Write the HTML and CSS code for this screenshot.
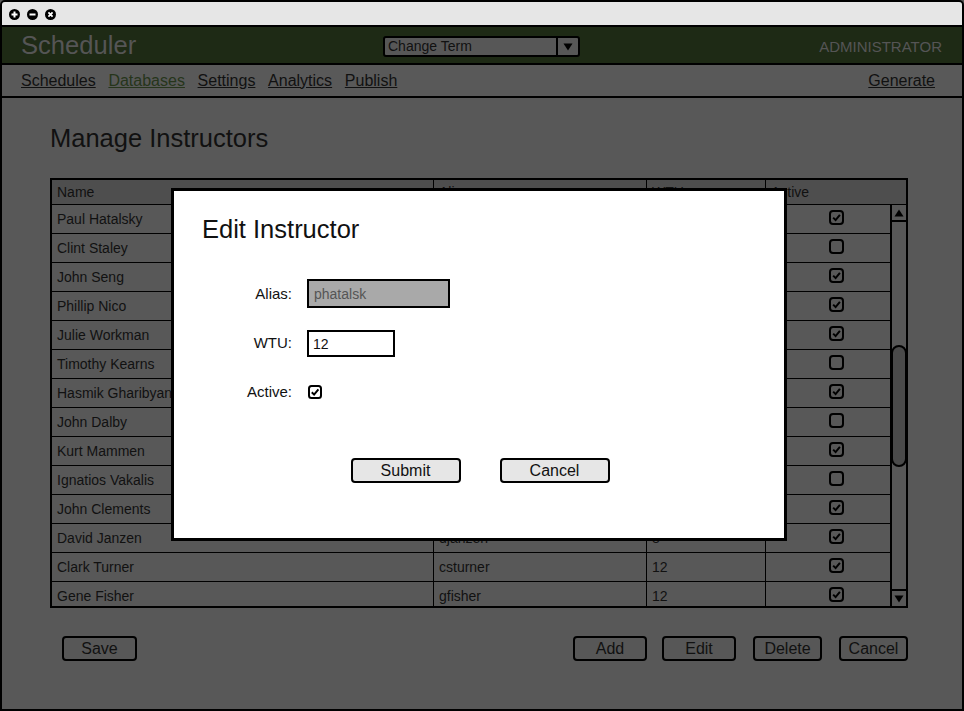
FILE: index.html
```html
<!DOCTYPE html>
<html>
<head>
<meta charset="utf-8">
<title>Scheduler</title>
<link rel="stylesheet" href="styles.css">
</head>
<body>
<div class="window">
  <div class="titlebar">
    <svg class="ctl" width="11" height="11" viewBox="0 0 11 11"><circle cx="5.5" cy="5.5" r="5.5" fill="#000"/><path d="M5.5 2.5v6M2.5 5.5h6" stroke="#fff" stroke-width="2"/></svg>
    <svg class="ctl" width="11" height="11" viewBox="0 0 11 11"><circle cx="5.5" cy="5.5" r="5.5" fill="#000"/><path d="M2.5 5.5h6" stroke="#fff" stroke-width="2"/></svg>
    <svg class="ctl" width="11" height="11" viewBox="0 0 11 11"><circle cx="5.5" cy="5.5" r="5.5" fill="#000"/><path d="M3.4 3.4l4.2 4.2M7.6 3.4l-4.2 4.2" stroke="#fff" stroke-width="1.8"/></svg>
  </div>
  <div class="header">
    <div class="brand">Scheduler</div>
    <div class="select">
      <span class="select-text">Change Term</span>
      <span class="select-arrow"><svg width="10" height="8" viewBox="0 0 10 8"><path d="M0.5 0.5h9L5 7.5z" fill="#000"/></svg></span>
    </div>
    <div class="role">ADMINISTRATOR</div>
  </div>
  <div class="nav">
    <div class="nav-links">
      <a class="nav-link">Schedules</a>
      <a class="nav-link current">Databases</a>
      <a class="nav-link">Settings</a>
      <a class="nav-link">Analytics</a>
      <a class="nav-link">Publish</a>
    </div>
    <a class="nav-link">Generate</a>
  </div>
  <div class="content">
    <h1 class="page-title">Manage Instructors</h1>
    <div class="table">
      <div class="thead">
        <div class="cell">Name</div>
        <div class="cell">Alias</div>
        <div class="cell">WTU</div>
        <div class="cell">Active</div>
      </div>
      <div class="tbody">
        <div class="rows" id="rows"></div>
        <div class="scrollbar">
          <div class="sb-btn sb-up"><svg width="10" height="8" viewBox="0 0 10 8"><path d="M5 0.5L9.5 7.5h-9z" fill="#000"/></svg></div>
          <div class="sb-thumb"></div>
          <div class="sb-btn sb-down"><svg width="10" height="8" viewBox="0 0 10 8"><path d="M0.5 0.5h9L5 7.5z" fill="#000"/></svg></div>
        </div>
      </div>
    </div>
    <div class="actions">
      <button class="btn">Save</button>
      <div class="actions-right">
        <button class="btn btn-add">Add</button>
        <button class="btn btn-edit">Edit</button>
        <button class="btn btn-delete">Delete</button>
        <button class="btn btn-cancel">Cancel</button>
      </div>
    </div>
  </div>

  <div class="dialog">
    <h2 class="dialog-title">Edit Instructor</h2>
    <div class="form">
      <label class="form-label">Alias:</label>
      <div class="field field-alias">phatalsk</div>
      <label class="form-label">WTU:</label>
      <div class="field field-wtu">12</div>
      <label class="form-label">Active:</label>
      <div class="form-check"><svg width="14" height="14" viewBox="0 0 14 14"><rect x="1" y="1" width="12" height="12" rx="2.5" fill="#fff" stroke="#000" stroke-width="2"/><path d="M3.8 7.2l2.3 2.4 4.3-5.2" fill="none" stroke="#000" stroke-width="2"/></svg></div>
    </div>
    <div class="dialog-buttons">
      <button class="dbtn">Submit</button>
      <button class="dbtn">Cancel</button>
    </div>
  </div>
</div>
<script src="script.js"></script>
</body>
</html>
```
FILE: script.js
```js
var data = [
  ["Paul Hatalsky","phatalsk","12",1],
  ["Clint Staley","cstaley","12",0],
  ["John Seng","jseng","12",1],
  ["Phillip Nico","pnico","12",1],
  ["Julie Workman","jworkman","12",1],
  ["Timothy Kearns","tkearns","12",0],
  ["Hasmik Gharibyan","hghariby","12",1],
  ["John Dalby","jdalby","12",0],
  ["Kurt Mammen","kmammen","12",1],
  ["Ignatios Vakalis","ivakalis","12",0],
  ["John Clements","clements","12",1],
  ["David Janzen","djanzen","8",1],
  ["Clark Turner","csturner","12",1],
  ["Gene Fisher","gfisher","12",1]
];
var on = '<svg width="15" height="15" viewBox="0 0 15 15"><rect x="1" y="1" width="13" height="13" rx="3" fill="none" stroke="#000" stroke-width="2"/><path d="M4.2 7.6l2.4 2.5 4.3-5.3" fill="none" stroke="#000" stroke-width="2"/></svg>';
var off = '<svg width="15" height="15" viewBox="0 0 15 15"><rect x="1" y="1" width="13" height="13" rx="3" fill="none" stroke="#000" stroke-width="2"/></svg>';
var html = "";
data.forEach(function (r) {
  html += '<div class="row"><div class="cell">' + r[0] + '</div><div class="cell">' + r[1] +
    '</div><div class="cell">' + r[2] + '</div><div class="cell cell-check">' + (r[3] ? on : off) + '</div></div>';
});
document.getElementById("rows").innerHTML = html;
```
FILE: styles.css
```css
* { box-sizing: border-box; }
html, body { margin: 0; padding: 0; }
body {
  font-family: "Liberation Sans", Arial, sans-serif;
  color: #111;
  background: #585858;
}
.window {
  width: 964px;
  height: 711px;
  border: 2px solid #000;
  border-radius: 5px 5px 0 0;
  background: #585858;
  position: relative;
  overflow: hidden;
  display: flex;
  flex-direction: column;
}
.titlebar {
  height: 25px;
  flex: none;
  background: #e6e6e6;
  border-bottom: 2px solid #000;
  display: flex;
  align-items: center;
  gap: 7px;
  padding-left: 7px;
  padding-top: 1px;
}
.ctl { display: block; }
.header {
  height: 38px;
  flex: none;
  background: #1e2a15;
  border-bottom: 2px solid #000;
  display: grid;
  grid-template-columns: 1fr auto 1fr;
  align-items: center;
  padding: 0 20px 0 19px;
}
.brand {
  font-size: 25.6px;
  color: #555;
  line-height: 30px;
}
.select {
  width: 197px;
  height: 21px;
  margin-top: 3px;
  border: 2px solid #000;
  border-radius: 3px;
  background: #575757;
  display: flex;
  align-items: stretch;
}
.select-text {
  flex: 1;
  font-size: 14px;
  line-height: 17px;
  padding-left: 3px;
  color: #111;
}
.select-arrow {
  width: 22px;
  border-left: 2px solid #000;
  display: flex;
  align-items: center;
  justify-content: center;
}
.select-arrow svg { display: block; }
.role {
  justify-self: end;
  font-size: 15px;
  color: #555;
  margin-top: 2px;
}
.nav {
  height: 33px;
  flex: none;
  background: #595959;
  border-bottom: 2px solid #000;
  display: flex;
  align-items: center;
  justify-content: space-between;
  padding: 0 27px 0 19px;
}
.nav-links { display: flex; gap: 12.7px; }
.nav-link {
  font-size: 16px;
  color: #111;
  text-decoration: underline;
  line-height: 20px;
}
.nav-link.current { color: #26351b; }
.content {
  flex: 1;
  padding: 25px 54px 0 48px;
}
.page-title {
  margin: 0 0 25px 0;
  font-size: 25.5px;
  font-weight: normal;
  line-height: 30px;
  color: #111;
}
.table {
  width: 858px;
  height: 430px;
  border: 2px solid #000;
  display: flex;
  flex-direction: column;
}
.thead {
  height: 25px;
  flex: none;
  background: #4e4e4e;
  border-bottom: 1px solid #000;
  display: grid;
  grid-template-columns: 381px 213px 119px 141px;
}
.row {
  height: 29px;
  border-bottom: 1px solid #000;
  display: grid;
  grid-template-columns: 381px 213px 119px 125px;
}
.cell {
  font-size: 14px;
  line-height: 16px;
  display: flex;
  align-items: center;
  padding-left: 5px;
  color: #111;
}
.cell + .cell { border-left: 1px solid #000; padding-left: 5px; }
.cell-check { justify-content: center; padding-left: 16px !important; padding-bottom: 3px; }
.cell-check svg { display: block; }
.tbody {
  flex: 1;
  display: flex;
  min-height: 0;
}
.rows { flex: 1; overflow: hidden; }
.scrollbar {
  width: 16px;
  border-left: 2px solid #000;
  position: relative;
  display: flex;
  flex-direction: column;
  justify-content: space-between;
}
.sb-btn {
  height: 17px;
  display: flex;
  align-items: center;
  justify-content: center;
}
.sb-btn svg { display: block; }
.sb-up { border-bottom: 2px solid #000; }
.sb-down { border-top: 2px solid #000; }
.sb-thumb {
  position: absolute;
  left: -1px;
  top: 140px;
  width: 16px;
  height: 122px;
  border: 2px solid #000;
  border-radius: 8px;
  background: #4a4a4a;
}
.actions {
  margin-top: 28px;
  padding-left: 12px;
  display: flex;
  justify-content: space-between;
}
.actions-right { display: flex; }
.btn {
  height: 25px;
  font-family: "Liberation Sans", Arial, sans-serif;
  font-size: 16px;
  color: #111;
  background: #575757;
  border: 2px solid #000;
  border-radius: 4px;
  padding: 0;
  width: 75px;
  line-height: 19px;
}
.btn-add { width: 74px; }
.btn-edit { width: 74px; margin-left: 15px; }
.btn-delete { width: 69px; margin-left: 17px; }
.btn-cancel { width: 69px; margin-left: 17px; }
.dialog {
  position: absolute;
  left: 169px;
  top: 186px;
  width: 616px;
  height: 353px;
  background: #fff;
  border: 3px solid #000;
  padding: 23px 0 0 28px;
}
.dialog-title {
  margin: 0;
  font-size: 25.5px;
  font-weight: normal;
  line-height: 30px;
  color: #111;
}
.form {
  margin-top: 25px;
  display: grid;
  grid-template-columns: 90px auto;
  grid-auto-rows: 49px;
  column-gap: 15px;
  align-items: center;
  justify-content: start;
}
.form-label {
  font-size: 15px;
  color: #111;
  text-align: right;
}
.field {
  border: 2px solid #000;
  font-size: 14px;
  display: flex;
  align-items: center;
  padding-left: 4px;
}
.field-alias {
  width: 143px;
  height: 29px;
  background: #a9a9a9;
  color: #555;
  padding-left: 5px;
}
.field-wtu {
  width: 88px;
  height: 27px;
  margin-top: 2px;
  background: #fff;
  color: #111;
}
.form-check svg { display: block; margin-left: 1px; }
.dialog-buttons {
  margin-top: 42px;
  margin-left: -26px;
  display: flex;
  justify-content: center;
  gap: 39px;
}
.dbtn {
  width: 110px;
  height: 25px;
  font-family: "Liberation Sans", Arial, sans-serif;
  font-size: 16px;
  color: #111;
  background: #e6e6e6;
  border: 2px solid #000;
  border-radius: 4px;
  padding: 0;
}
```
